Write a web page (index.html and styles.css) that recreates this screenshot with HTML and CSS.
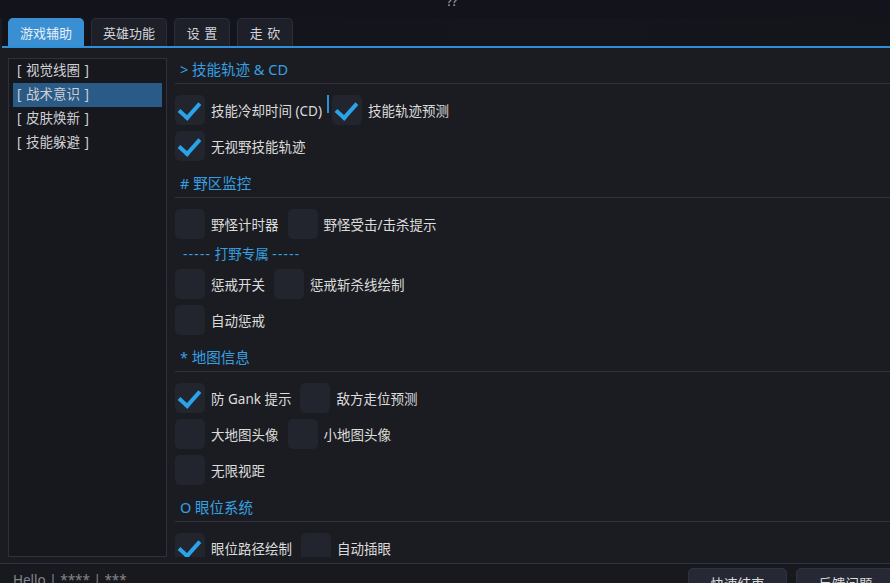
FILE: index.html
```html
<!DOCTYPE html>
<html lang="zh-CN">
<head>
    <meta charset="UTF-8">
    <title>??</title>
    <link rel="stylesheet" href="styles.css">
</head>
<body>
    <div class="titlebar"><span class="title">??</span></div>

    <div class="tabs">
        <div class="tab active">游戏辅助</div>
        <div class="tab">英雄功能</div>
        <div class="tab spaced">设 置</div>
        <div class="tab spaced">走 砍</div>
    </div>

    <div class="main">
        <aside class="sidebar">
            <div class="side-item">[ 视觉线圈 ]</div>
            <div class="side-item selected">[ 战术意识 ]</div>
            <div class="side-item">[ 皮肤焕新 ]</div>
            <div class="side-item">[ 技能躲避 ]</div>
        </aside>

        <section class="content">
            <h2 class="section-title">&gt; 技能轨迹 &amp; CD</h2>
            <div class="rows">
                <div class="row">
                    <label class="check on"><span class="box"></span>技能冷却时间 (CD)</label>
                    <span class="caret"></span>
                    <label class="check on"><span class="box"></span>技能轨迹预测</label>
                </div>
                <div class="row">
                    <label class="check on"><span class="box"></span>无视野技能轨迹</label>
                </div>
            </div>

            <h2 class="section-title"># 野区监控</h2>
            <div class="rows">
                <div class="row">
                    <label class="check"><span class="box"></span>野怪计时器</label>
                    <label class="check"><span class="box"></span>野怪受击/击杀提示</label>
                </div>
                <div class="sub-title"><span class="dashes">-----</span> 打野专属 <span class="dashes">-----</span></div>
                <div class="row">
                    <label class="check"><span class="box"></span>惩戒开关</label>
                    <label class="check"><span class="box"></span>惩戒斩杀线绘制</label>
                </div>
                <div class="row">
                    <label class="check"><span class="box"></span>自动惩戒</label>
                </div>
            </div>

            <h2 class="section-title">* 地图信息</h2>
            <div class="rows">
                <div class="row">
                    <label class="check on"><span class="box"></span>防 Gank 提示</label>
                    <label class="check"><span class="box"></span>敌方走位预测</label>
                </div>
                <div class="row">
                    <label class="check"><span class="box"></span>大地图头像</label>
                    <label class="check"><span class="box"></span>小地图头像</label>
                </div>
                <div class="row">
                    <label class="check"><span class="box"></span>无限视距</label>
                </div>
            </div>

            <h2 class="section-title">O 眼位系统</h2>
            <div class="rows">
                <div class="row">
                    <label class="check on"><span class="box"></span>眼位路径绘制</label>
                    <label class="check"><span class="box"></span>自动插眼</label>
                </div>
            </div>
        </section>
    </div>

    <footer class="footer">
        <div class="divider"></div>
        <div class="status-row">
            <span class="status">Hello | **** | ***</span>
            <div class="buttons">
                <button class="btn">快速结束</button>
                <button class="btn">反馈问题</button>
            </div>
        </div>
    </footer>
</body>
</html>
```

FILE: styles.css
```css
* {
    margin: 0;
    padding: 0;
    box-sizing: border-box;
}

body {
    width: 890px;
    height: 583px;
    overflow: hidden;
    font-family: "Noto Sans", "Noto Sans CJK SC", sans-serif;
    font-size: 13.5px;
    color: #dcdcdc;
    background: #1b1c21;
}

.titlebar {
    height: 18px;
    overflow: hidden;
    text-align: center;
    background: #13141b;
}

.title {
    display: block;
    line-height: 4px;
    font-size: 12px;
    color: #b0b0b8;
    padding-left: 14px;
}

.tabs {
    display: flex;
    gap: 7px;
    height: 30px;
    margin-left: 2px;
    padding-left: 6px;
    background: linear-gradient(to right, #13141b, #15161d 60%, #14151b);
    border-bottom: 2px solid #2c8fd8;
}

.tab {
    min-width: 56px;
    height: 28px;
    padding: 0 11px;
    line-height: 28px;
    text-align: center;
    font-size: 13px;
    color: #d2d4da;
    background: #1e2029;
    border: 1px solid #2b2e3a;
    border-bottom: none;
    border-radius: 5px 5px 0 0;
}

.tab.spaced {
    padding: 0 10px;
    word-spacing: 1px;
}

.tab.active {
    background: #3a8fd2;
    border-color: #3a8fd2;
    color: #e8f0f8;
}

.main {
    display: flex;
    height: 509px;
    overflow: hidden;
}

.sidebar {
    width: 159px;
    margin: 10px 0 0 8px;
    padding: 0 4px;
    background: #17181e;
    border: 1px solid #2c3040;
    flex-shrink: 0;
}

.side-item {
    height: 24px;
    line-height: 22px;
    padding-left: 4px;
    color: #cfd0d4;
    white-space: nowrap;
    word-spacing: 1px;
}

.side-item.selected {
    background: #2a5a86;
}

.content {
    flex: 1;
    min-width: 0;
    margin-left: 8px;
}

.section-title {
    padding: 11px 0 4px 5px;
    line-height: 20px;
    font-size: 14.5px;
    font-weight: normal;
    color: #36a0e2;
    border-bottom: 1px solid #30333f;
}

.rows {
    display: flex;
    flex-direction: column;
    gap: 6px;
    padding-top: 11px;
    margin-bottom: 1px;
}

.row {
    display: flex;
    align-items: center;
    height: 30px;
}

.check {
    display: flex;
    align-items: center;
    margin-right: 9px;
    white-space: nowrap;
    color: #dcdcdc;
}

.box {
    position: relative;
    width: 30px;
    height: 30px;
    margin-right: 6px;
    background: #22252e;
    border-radius: 5px;
}

.check.on .box::after {
    content: '';
    position: absolute;
    left: 8px;
    top: 3px;
    width: 9px;
    height: 17px;
    border: solid #2ba3ea;
    border-width: 0 4px 4px 0;
    transform: rotate(42deg);
    transform-origin: center;
}

.caret {
    align-self: flex-start;
    width: 2px;
    height: 18px;
    margin: 0 3px 0 -4px;
    background: #2c8fd8;
}

.sub-title {
    height: 18px;
    line-height: 18px;
    padding-left: 8px;
    color: #36a0e2;
}

.dashes {
    letter-spacing: 1.3px;
}

.footer {
    height: 26px;
    background: #18191e;
}

.divider {
    margin-top: 6px;
    height: 1px;
    background: #2d3142;
}

.status-row {
    display: flex;
    justify-content: space-between;
    align-items: flex-start;
}

.status {
    padding: 7px 0 0 13px;
    line-height: 18px;
    color: #85868c;
}

.buttons {
    display: flex;
    gap: 9px;
    margin-top: 4px;
    margin-right: -5px;
}

.btn {
    width: 99px;
    height: 30px;
    font-family: inherit;
    font-size: 13.5px;
    color: #dcdcdc;
    background: #262935;
    border: 1px solid #2f3240;
    border-radius: 5px;
}
```
